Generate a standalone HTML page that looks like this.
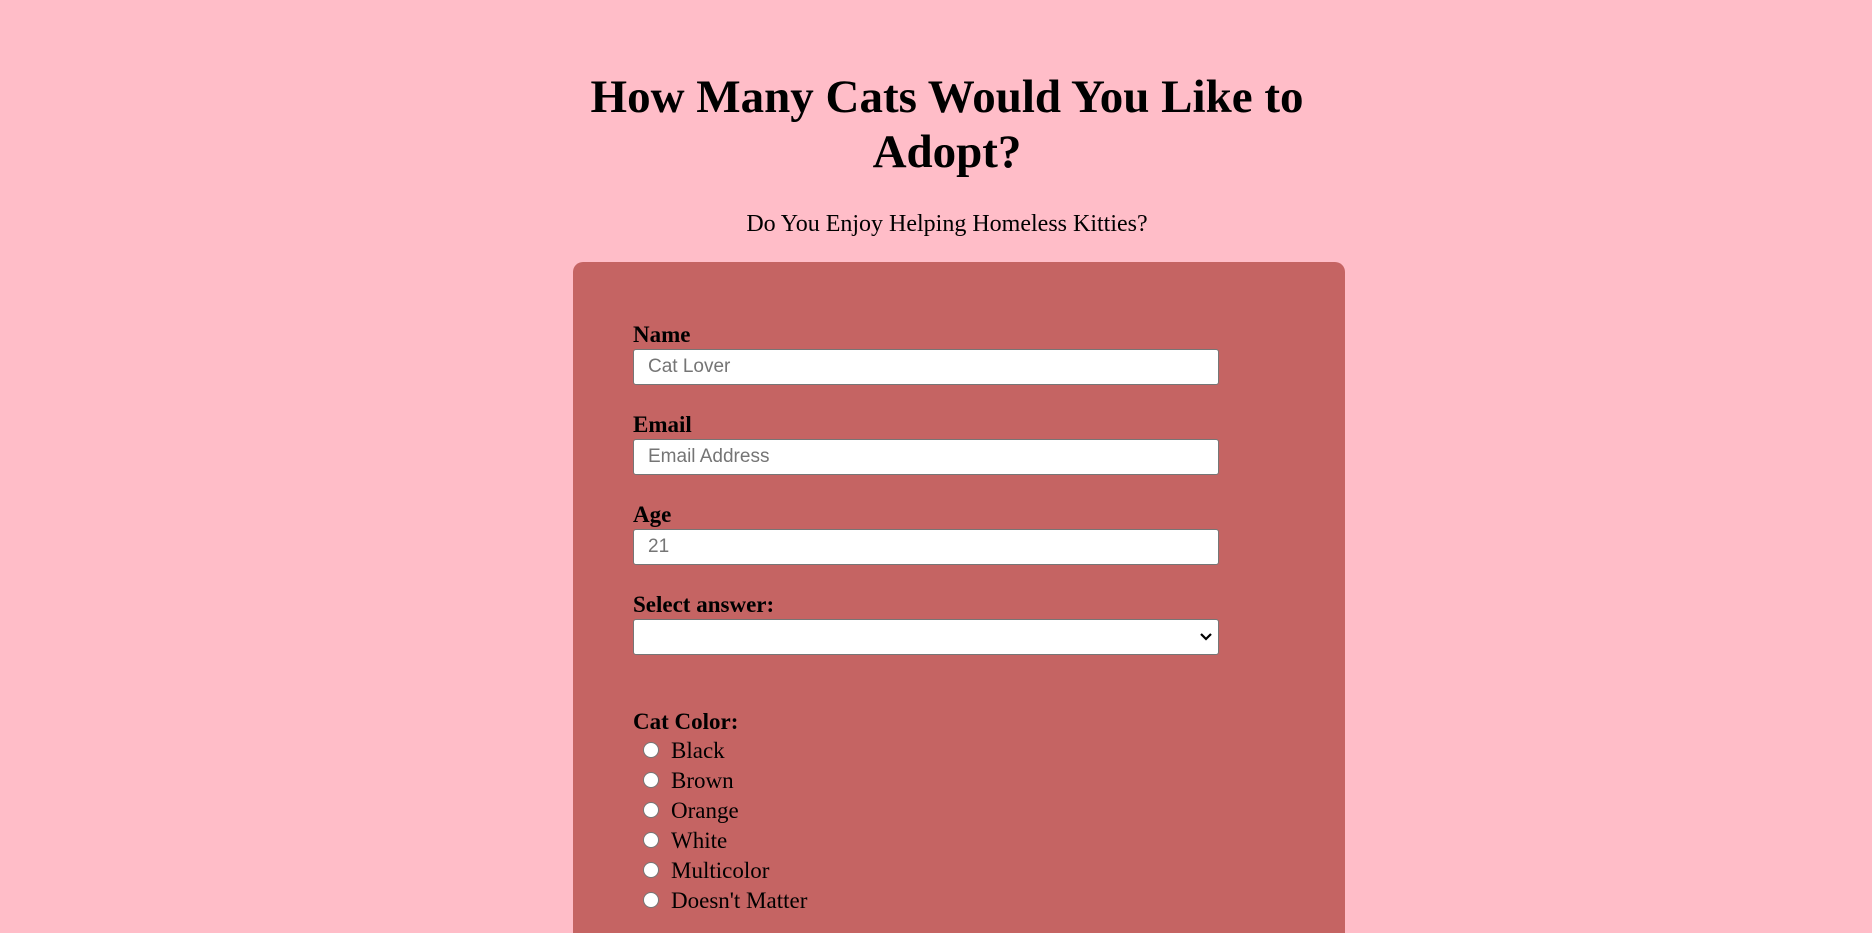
<!DOCTYPE html>
<html><head><meta charset="utf-8"><style>
html,body{margin:0;padding:0;width:1872px;height:933px;overflow:hidden;background:#ffbdc8;font-family:"Liberation Serif",serif;color:#000}
.abs{position:absolute}
h1{position:absolute;left:547px;width:800px;top:70px;margin:0;text-align:center;font-size:47px;line-height:55px;font-weight:bold}
.sub{left:547px;width:800px;top:209px;text-align:center;font-size:24px;line-height:30px}
.card{left:573px;top:262px;width:772px;height:671px;background:#c56463;border-radius:10px 10px 0 0}
.lbl{position:absolute;left:633px;font-weight:bold;font-size:23px;line-height:26px}
.inp{position:absolute;left:633px;width:584px;height:34px;background:#fff;border:1px solid #767676;border-radius:3px;font-family:"Liberation Sans",sans-serif;font-size:19px;color:#757575;line-height:34px;padding-left:14px;box-sizing:content-box}
.radio{position:absolute;left:643px;width:14px;height:14px;border:1px solid #767676;border-radius:50%;background:#fff}
.opt{position:absolute;left:671px;font-size:23px;line-height:26px}
</style></head><body>
<h1>How Many Cats Would You Like to Adopt?</h1>
<div class="abs sub">Do You Enjoy Helping Homeless Kitties?</div>
<div class="abs card"></div>
<div class="lbl" style="top:322px">Name</div>
<div class="inp" style="top:349px;width:570px">Cat Lover</div>
<div class="lbl" style="top:412px">Email</div>
<div class="inp" style="top:439px;width:570px">Email Address</div>
<div class="lbl" style="top:502px">Age</div>
<div class="inp" style="top:529px;width:570px">21</div>
<div class="lbl" style="top:592px">Select answer:</div>
<div class="inp" style="top:619px;width:570px"></div>
<svg class="abs" style="left:1199px;top:632px" width="14" height="10" viewBox="0 0 14 10"><path d="M2 2 L7 7 L12 2" fill="none" stroke="#000" stroke-width="2.2"/></svg>
<div class="lbl" style="top:709px">Cat Color:</div>
<div class="radio" style="top:742px"></div><div class="opt" style="top:738px">Black</div>
<div class="radio" style="top:772px"></div><div class="opt" style="top:768px">Brown</div>
<div class="radio" style="top:802px"></div><div class="opt" style="top:798px">Orange</div>
<div class="radio" style="top:832px"></div><div class="opt" style="top:828px">White</div>
<div class="radio" style="top:862px"></div><div class="opt" style="top:858px">Multicolor</div>
<div class="radio" style="top:892px"></div><div class="opt" style="top:888px">Doesn't Matter</div>
</body></html>
